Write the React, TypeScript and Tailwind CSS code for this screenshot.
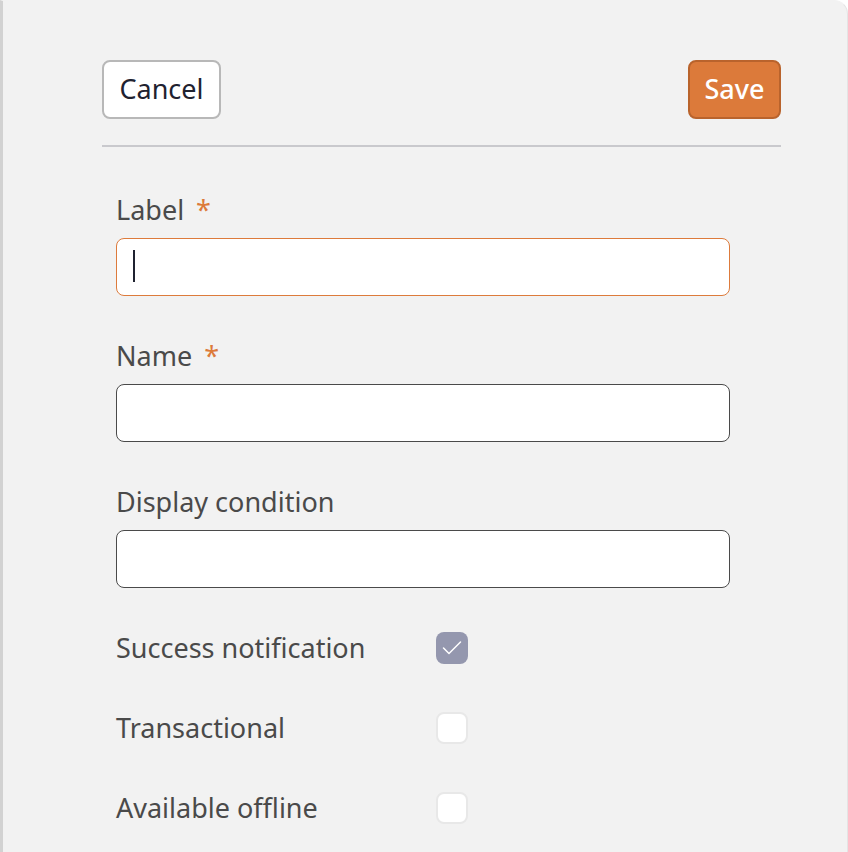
import { useState } from "react";

type FieldDef = {
  label: string;
  required?: boolean;
  focused?: boolean;
};

const fields: FieldDef[] = [
  { label: "Label", required: true, focused: true },
  { label: "Name", required: true },
  { label: "Display condition" },
];

const toggles = [
  { id: "success", label: "Success notification", checked: true },
  { id: "transactional", label: "Transactional", checked: false },
  { id: "offline", label: "Available offline", checked: false },
];

function Check({ checked, onChange }: { checked: boolean; onChange: () => void }) {
  return (
    <button
      type="button"
      onClick={onChange}
      className={
        checked
          ? "flex h-[32px] w-[32px] items-center justify-center rounded-[8px] bg-[#9497ae]"
          : "flex h-[32px] w-[32px] items-center justify-center rounded-[8px] border-2 border-[#e8e8e8] bg-white"
      }
    >
      {checked && (
        <svg width="32" height="32" viewBox="0 0 32 32" fill="none">
          <path d="M7.5 16 L13 21.5 L24.5 10" stroke="white" strokeWidth="1.5" strokeLinecap="round" strokeLinejoin="round" />
        </svg>
      )}
    </button>
  );
}

export default function App() {
  const [checks, setChecks] = useState<Record<string, boolean>>(
    Object.fromEntries(toggles.map((t) => [t.id, t.checked]))
  );

  return (
    <div
      className="h-[852px] w-[848px] overflow-hidden bg-white"
      style={{ fontFamily: '"Noto Sans", "Open Sans", sans-serif' }}
    >
      <div className="h-full rounded-tr-[14px] border-l-[3px] border-r border-t border-l-[#d2d2d2] border-r-[#e4e4e4] border-t-[#f2f2f2] bg-[#f2f2f2] pl-[99px] pr-[66px] pt-[59px]">
        <div className="flex items-center justify-between">
          <button
            type="button"
            className="h-[59px] w-[119px] rounded-[8px] border-2 border-[#b8b8b8] bg-white text-[27px] text-[#1f2230]"
          >
            Cancel
          </button>
          <button
            type="button"
            className="h-[59px] w-[93px] rounded-[8px] border-2 border-[#b9632c] bg-[#dc7a3a] text-[27px] font-medium text-white"
          >
            Save
          </button>
        </div>
        <div className="mt-[26px] h-[2px] bg-[#c9c9cd]" />

        <div className="w-[628px] pl-[14px] pt-[47px]">
          {fields.map((field) => (
            <div key={field.label} className="mb-[44px]">
              <label className="mb-[12px] flex h-[32px] items-center text-[27px] leading-[32px] text-[#4a4a4a]">
                {field.label}
                {field.required && <span className="ml-[12px] text-[#dc7a3a]">*</span>}
              </label>
              <div className="relative">
                <input
                  className={
                    field.focused
                      ? "block h-[58px] w-full rounded-[8px] border border-[#dd7b3c] bg-white px-[16px] text-[27px] text-[#1f2230] caret-transparent outline-none"
                      : "block h-[58px] w-full rounded-[8px] border border-[#4a4a4a] bg-white px-[16px] text-[27px] text-[#1f2230] outline-none"
                  }
                />
                {field.focused && (
                  <span className="pointer-events-none absolute left-[17px] top-[12px] h-[32px] w-[2px] bg-[#1f2230]" />
                )}
              </div>
            </div>
          ))}

          <div className="mt-[7px] flex flex-col gap-[48px]">
            {toggles.map((t) => (
              <div key={t.id} className="flex h-[32px] items-center">
                <span className="w-[320px] text-[27px] text-[#4a4a4a]">{t.label}</span>
                <Check
                  checked={checks[t.id]}
                  onChange={() => setChecks((prev) => ({ ...prev, [t.id]: !prev[t.id] }))}
                />
              </div>
            ))}
          </div>
        </div>
      </div>
    </div>
  );
}
